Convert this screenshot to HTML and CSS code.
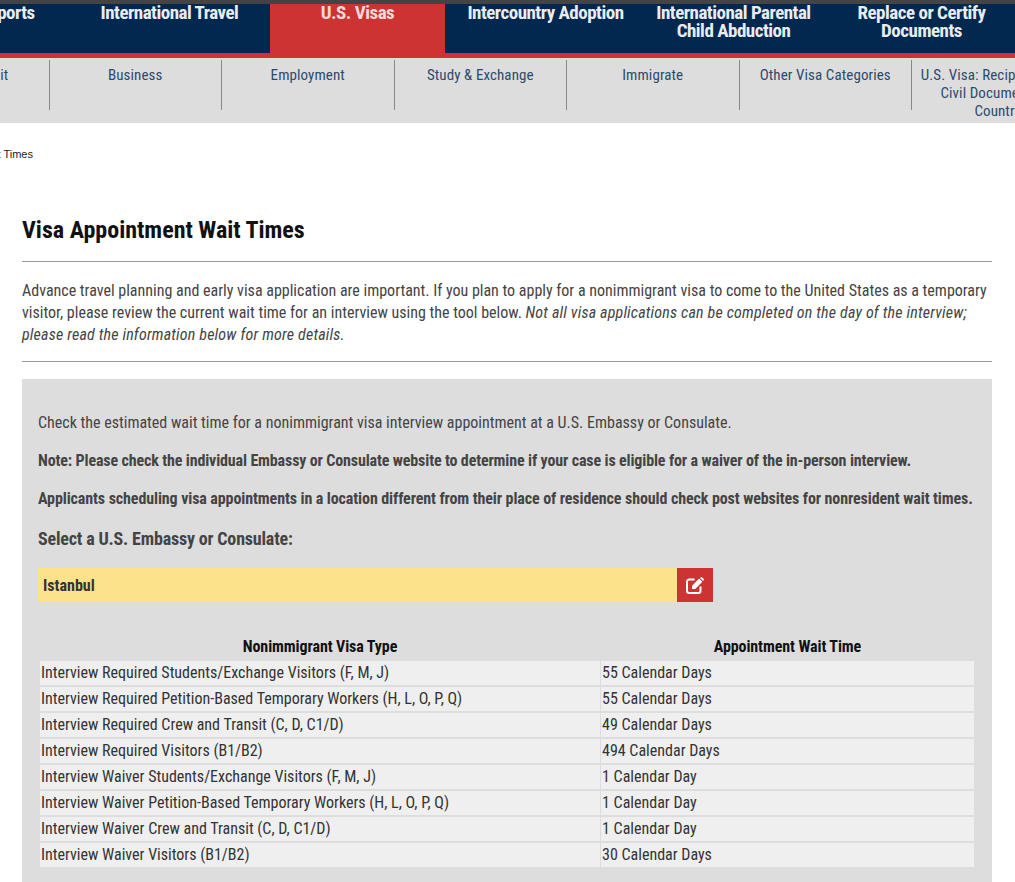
FILE: index.html
```html
<!DOCTYPE html>
<html>
<head>
    <title>Visa Appointment Wait Times</title>
    <link rel="stylesheet" href="styles.css">
</head>
<body>
    <div class="top-strip"></div>
    <div class="main-nav">
        <a class="main-link">U.S. Passports</a>
        <a class="main-link">International Travel</a>
        <a class="main-link active">U.S. Visas</a>
        <a class="main-link">Intercountry Adoption</a>
        <a class="main-link">International Parental Child Abduction</a>
        <a class="main-link">Replace or Certify Documents</a>
    </div>
    <div class="sub-nav">
        <a class="sub-link">Tourism &amp; Visit</a>
        <a class="sub-link">Business</a>
        <a class="sub-link">Employment</a>
        <a class="sub-link">Study &amp; Exchange</a>
        <a class="sub-link">Immigrate</a>
        <a class="sub-link">Other Visa Categories</a>
        <a class="sub-link">U.S. Visa: Reciprocity and Civil Documents by Country</a>
    </div>

    <div class="breadcrumb">Wait Times</div>

    <div class="content">
        <h1>Visa Appointment Wait Times</h1>
        <div class="intro">
            Advance travel planning and early visa application are important. If you plan to apply for a nonimmigrant visa to come to the United States as a temporary visitor, please review the current wait time for an interview using the tool below.
            <em>Not all visa applications can be completed on the day of the interview; please read the information below for more details.</em>
        </div>

        <div class="tool">
            <p>Check the estimated wait time for a nonimmigrant visa interview appointment at a U.S. Embassy or Consulate.</p>
            <p class="strong note">Note: Please check the individual Embassy or Consulate website to determine if your case is eligible for a waiver of the in-person interview.</p>
            <p class="strong applicants">Applicants scheduling visa appointments in a location different from their place of residence should check post websites for nonresident wait times.</p>
            <h2>Select a U.S. Embassy or Consulate:</h2>
            <div class="picker">
                <div class="picker-value">Istanbul</div>
                <div class="picker-btn">
                    <svg width="18" height="17" viewBox="0 0 18 17">
                        <path d="M8.5 2.5H3.2A2.2 2.2 0 0 0 1 4.7v9.1A2.2 2.2 0 0 0 3.2 16h9.1a2.2 2.2 0 0 0 2.2-2.2V9.5" fill="none" stroke="#fff" stroke-width="2"/>
                        <path d="M6 8.8 13.2 1.6l3.2 3.2-7.2 7.2H6z" fill="#fff"/>
                        <path d="M14 .9l.9-.6a1 1 0 0 1 1.3.1l1.4 1.4a1 1 0 0 1 .1 1.3l-.6.9z" fill="#fff"/>
                    </svg>
                </div>
            </div>
            <table class="wait-table">
                <thead>
                    <tr><th class="col-type">Nonimmigrant Visa Type</th><th>Appointment Wait Time</th></tr>
                </thead>
                <tbody>
                    <tr><td>Interview Required Students/Exchange Visitors (F, M, J)</td><td>55 Calendar Days</td></tr>
                    <tr><td>Interview Required Petition-Based Temporary Workers (H, L, O, P, Q)</td><td>55 Calendar Days</td></tr>
                    <tr><td>Interview Required Crew and Transit (C, D, C1/D)</td><td>49 Calendar Days</td></tr>
                    <tr><td>Interview Required Visitors (B1/B2)</td><td>494 Calendar Days</td></tr>
                    <tr><td>Interview Waiver Students/Exchange Visitors (F, M, J)</td><td>1 Calendar Day</td></tr>
                    <tr><td>Interview Waiver Petition-Based Temporary Workers (H, L, O, P, Q)</td><td>1 Calendar Day</td></tr>
                    <tr><td>Interview Waiver Crew and Transit (C, D, C1/D)</td><td>1 Calendar Day</td></tr>
                    <tr><td>Interview Waiver Visitors (B1/B2)</td><td>30 Calendar Days</td></tr>
                </tbody>
            </table>
        </div>
    </div>
</body>
</html>
```

FILE: styles.css
```css
/* Base styles */
* {
    margin: 0;
    padding: 0;
    box-sizing: border-box;
}

html, body {
    height: 882px;
    overflow: hidden;
}

body {
    font-family: "Roboto Condensed", "Liberation Sans Narrow", Roboto, sans-serif;
    font-stretch: 75%;
    background-color: #fff;
    color: #444;
    font-size: 16px;
}

/* Main nav */
.top-strip {
    height: 4px;
    background-color: #444;
}

.main-nav {
    display: flex;
    gap: 13px;
    height: 54px;
    margin-left: -106px;
    width: 1300px;
    background-color: #03284f;
    border-bottom: 5px solid #cc3333;
}

.main-link {
    flex: 0 0 175px;
    height: 54px;
    color: #e9edf2;
    font-size: 19px;
    font-weight: 700;
    letter-spacing: -0.5px;
    line-height: 18px;
    text-align: center;
}

.main-link.active {
    background-color: #cc3333;
    color: #f3d9d9;
}

/* Sub nav */
.sub-nav {
    display: flex;
    height: 65px;
    margin-left: -123px;
    width: 1400px;
    padding-top: 2px;
    background-color: #ddd;
}

.sub-link {
    flex: 0 0 172.5px;
    height: 50px;
    padding: 6px 8px 0;
    border-right: 1px solid #888;
    color: #2c4a6b;
    font-size: 15px;
    letter-spacing: 0.1px;
    line-height: 18px;
    text-align: center;
}

/* Breadcrumb */
.breadcrumb {
    margin: 25px 0 0 -21px;
    color: #222;
    font-family: "Liberation Sans", Arial, sans-serif;
    font-stretch: 100%;
    font-size: 11px;
    line-height: 13px;
}

/* Page content */
.content {
    padding: 0 23px 0 22px;
}

h1 {
    margin-top: 54px;
    padding-bottom: 16px;
    border-bottom: 1px solid #999;
    color: #111;
    font-size: 24px;
    font-weight: 700;
    line-height: 30px;
}

.intro {
    padding: 18px 0 15px;
    border-bottom: 1px solid #999;
    line-height: 22px;
}

.intro em {
    letter-spacing: 0.18px;
}

/* Wait time tool */
.tool {
    height: 520px;
    margin-top: 17px;
    padding: 33px 8px 0 16px;
    background-color: #ddd;
}

.tool p {
    margin-bottom: 16px;
    line-height: 22px;
}

.tool p.strong {
    font-weight: 700;
}

.tool p.note {
    letter-spacing: -0.14px;
}

.tool p.applicants {
    letter-spacing: -0.1px;
}

.tool h2 {
    margin-top: 18px;
    font-size: 18px;
    font-weight: 700;
    letter-spacing: -0.18px;
    line-height: 22px;
}

.picker {
    display: flex;
    width: 675px;
    height: 34px;
    margin-top: 18px;
}

.picker-value {
    flex: 1;
    padding-left: 5px;
    background-color: #fde28c;
    color: #333;
    font-weight: 700;
    line-height: 36px;
}

.picker-btn {
    display: flex;
    flex: 0 0 36px;
    align-items: center;
    justify-content: center;
    background-color: #cc3333;
}

.wait-table {
    width: 936px;
    margin: 31px 0 0 1px;
    border-collapse: separate;
    border-spacing: 1px 2px;
    table-layout: fixed;
    color: #333;
}

.wait-table th {
    height: 24px;
    color: #111;
    font-weight: 700;
    letter-spacing: -0.1px;
    line-height: 22px;
    text-align: center;
}

.col-type {
    width: 560px;
}

.wait-table td {
    height: 24px;
    padding-left: 1px;
    background-color: #efefef;
    line-height: 24px;
}
```
